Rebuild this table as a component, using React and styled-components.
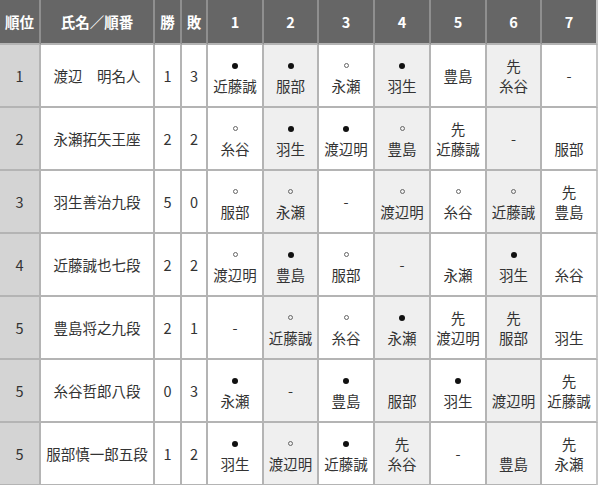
import React from "react";
import styled, { createGlobalStyle } from "styled-components";

const GlobalStyle = createGlobalStyle`
  body {
    margin: 0;
    background: #ffffff;
    font-family: "Noto Sans CJK JP", "Noto Sans", sans-serif;
  }
`;

const COLS = "41px 114px 27px 26px 56px 55px 56px 56px 56px 55px 56px";

const Table = styled.div`
  width: 599px;
  display: flex;
  flex-direction: column;
`;

const Row = styled.div`
  display: grid;
  grid-template-columns: ${COLS};
  height: ${(p) => (p.$header ? "45px" : "63px")};
`;

const HeadCell = styled.div`
  box-sizing: border-box;
  background: #666666;
  color: #ffffff;
  font-weight: bold;
  font-size: 14.5px;
  display: flex;
  align-items: center;
  justify-content: center;
  border-right: 2px solid #8f8f8f;
  border-bottom: 2px solid #b4b4b4;
  &:last-child {
    border-right-color: #c8c8c8;
  }
`;

const Cell = styled.div`
  box-sizing: border-box;
  background: ${(p) => (p.$rank ? "#d4d4d4" : p.$shade ? "#efefef" : "#ffffff")};
  color: #333333;
  font-size: 14.5px;
  line-height: 20px;
  display: flex;
  flex-direction: column;
  align-items: center;
  justify-content: center;
  text-align: center;
  border-right: 2px solid #b4b4b4;
  border-bottom: 2px solid #b4b4b4;
  white-space: nowrap;
  &:last-child {
    border-right-color: #c8c8c8;
  }
`;

const MarkLine = styled.div`
  height: 20px;
  display: flex;
  align-items: center;
  justify-content: center;
`;

const Dot = styled.span`
  width: ${(p) => (p.$filled ? "6px" : "5px")};
  height: ${(p) => (p.$filled ? "6px" : "5px")};
  border-radius: 50%;
  box-sizing: border-box;
  background: ${(p) => (p.$filled ? "#111111" : "transparent")};
  border: ${(p) => (p.$filled ? "none" : "1px solid #666666")};
`;

const headers = ["順位", "氏名／順番", "勝", "敗", "1", "2", "3", "4", "5", "6", "7"];

// mark: "b" = ●, "w" = ○, "先", "" = empty top line, null = single centered line
const rows = [
  {
    rank: "1", name: "渡辺　明名人", win: "1", lose: "3",
    games: [["b", "近藤誠"], ["b", "服部"], ["w", "永瀬"], ["b", "羽生"], [null, "豊島"], ["先", "糸谷"], [null, "-"]],
  },
  {
    rank: "2", name: "永瀬拓矢王座", win: "2", lose: "2",
    games: [["w", "糸谷"], ["b", "羽生"], ["b", "渡辺明"], ["w", "豊島"], ["先", "近藤誠"], [null, "-"], ["", "服部"]],
  },
  {
    rank: "3", name: "羽生善治九段", win: "5", lose: "0",
    games: [["w", "服部"], ["w", "永瀬"], [null, "-"], ["w", "渡辺明"], ["w", "糸谷"], ["w", "近藤誠"], ["先", "豊島"]],
  },
  {
    rank: "4", name: "近藤誠也七段", win: "2", lose: "2",
    games: [["w", "渡辺明"], ["b", "豊島"], ["w", "服部"], [null, "-"], ["", "永瀬"], ["b", "羽生"], ["", "糸谷"]],
  },
  {
    rank: "5", name: "豊島将之九段", win: "2", lose: "1",
    games: [[null, "-"], ["w", "近藤誠"], ["w", "糸谷"], ["b", "永瀬"], ["先", "渡辺明"], ["先", "服部"], ["", "羽生"]],
  },
  {
    rank: "5", name: "糸谷哲郎八段", win: "0", lose: "3",
    games: [["b", "永瀬"], [null, "-"], ["b", "豊島"], ["", "服部"], ["b", "羽生"], ["", "渡辺明"], ["先", "近藤誠"]],
  },
  {
    rank: "5", name: "服部慎一郎五段", win: "1", lose: "2",
    games: [["b", "羽生"], ["w", "渡辺明"], ["b", "近藤誠"], ["先", "糸谷"], [null, "-"], ["", "豊島"], ["先", "永瀬"]],
  },
];

const Mark = ({ mark }) => {
  if (mark === null) return null;
  if (mark === "b") return <MarkLine><Dot $filled /></MarkLine>;
  if (mark === "w") return <MarkLine><Dot /></MarkLine>;
  return <MarkLine>{mark}</MarkLine>;
};

const App = () => {
  return (
    <>
      <GlobalStyle />
      <Table>
        <Row $header>
          {headers.map((h) => (
            <HeadCell key={h}>{h}</HeadCell>
          ))}
        </Row>
        {rows.map((r, i) => (
          <Row key={i}>
            <Cell $rank>{r.rank}</Cell>
            <Cell>{r.name}</Cell>
            <Cell>{r.win}</Cell>
            <Cell>{r.lose}</Cell>
            {r.games.map(([mark, opp], j) => (
              <Cell key={j} $shade={j % 2 === 1}>
                <Mark mark={mark} />
                <div>{opp}</div>
              </Cell>
            ))}
          </Row>
        ))}
      </Table>
    </>
  );
};

export default App;
